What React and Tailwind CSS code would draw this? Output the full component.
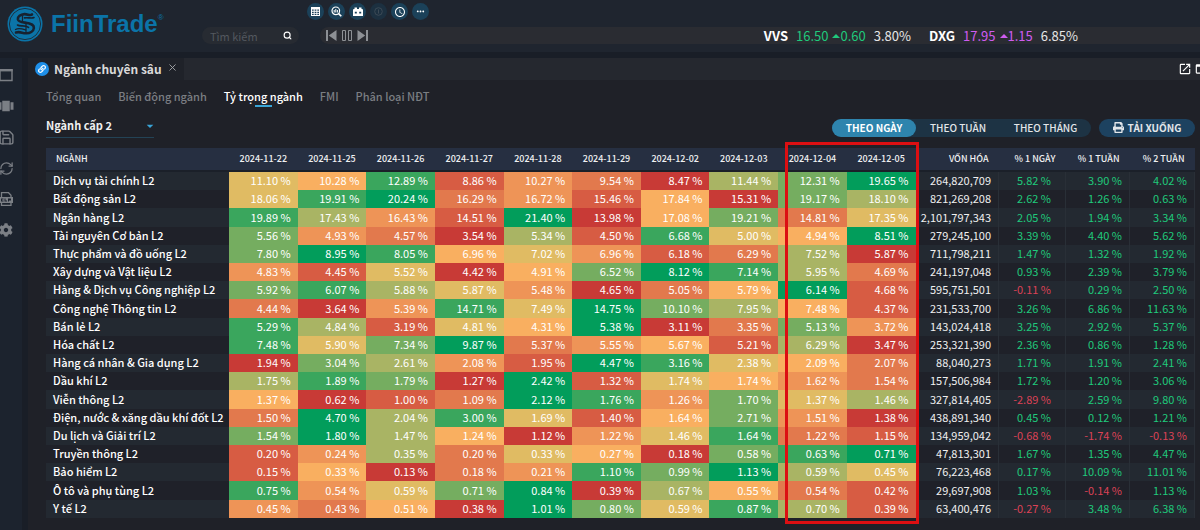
import React from 'react';
import { FaCog, FaPrint, FaLink } from 'react-icons/fa';
import {
  MdOpenInNew,
  MdOutlineWebAsset,
  MdViewCarousel,
  MdAccessTime,
  MdMoreHoriz,
  MdArrowDropDown,
} from 'react-icons/md';
import { Search, RefreshCw, Save, X } from 'lucide-react';

const DATES = [
  '2024-11-22', '2024-11-25', '2024-11-26', '2024-11-27', '2024-11-28',
  '2024-11-29', '2024-12-02', '2024-12-03', '2024-12-04', '2024-12-05',
];

// name, daily weights, market cap, % 1 day, % 1 week, % 2 weeks
const ROWS = [
  ['Dịch vụ tài chính L2', [11.1, 10.28, 12.89, 8.86, 10.27, 9.54, 8.47, 11.44, 12.31, 19.65], 264820709, 5.82, 3.9, 4.02],
  ['Bất động sản L2', [18.06, 19.91, 20.24, 16.29, 16.72, 15.46, 17.84, 15.31, 19.17, 18.1], 821269208, 2.62, 1.26, 0.63],
  ['Ngân hàng L2', [19.89, 17.43, 16.43, 14.51, 21.4, 13.98, 17.08, 19.21, 14.81, 17.35], 2101797343, 2.05, 1.94, 3.34],
  ['Tài nguyên Cơ bản L2', [5.56, 4.93, 4.57, 3.54, 5.34, 4.5, 6.68, 5.0, 4.94, 8.51], 279245100, 3.39, 4.4, 5.62],
  ['Thực phẩm và đồ uống L2', [7.8, 8.95, 8.05, 6.962, 7.02, 6.958, 6.18, 6.29, 7.52, 5.87], 711798211, 1.47, 1.32, 1.92],
  ['Xây dựng và Vật liệu L2', [4.83, 4.45, 5.52, 4.42, 4.91, 6.52, 8.12, 7.14, 5.95, 4.69], 241197048, 0.93, 2.39, 3.79],
  ['Hàng & Dịch vụ Công nghiệp L2', [5.92, 6.07, 5.88, 5.87, 5.48, 4.65, 5.05, 5.79, 6.14, 4.68], 595751501, -0.11, 0.29, 2.5],
  ['Công nghệ Thông tin L2', [4.44, 3.64, 5.39, 14.71, 7.49, 14.75, 10.1, 7.95, 7.48, 4.37], 231533700, 3.26, 6.86, 11.63],
  ['Bán lẻ L2', [5.29, 4.84, 3.19, 4.81, 4.31, 5.38, 3.11, 3.35, 5.13, 3.72], 143024418, 3.25, 2.92, 5.37],
  ['Hóa chất L2', [7.48, 5.9, 7.34, 9.87, 5.37, 5.55, 5.67, 5.21, 6.29, 3.47], 253321390, 2.36, 0.86, 1.28],
  ['Hàng cá nhân & Gia dụng L2', [1.94, 3.04, 2.61, 2.08, 1.95, 4.47, 3.16, 2.38, 2.09, 2.07], 88040273, 1.71, 1.91, 2.41],
  ['Dầu khí L2', [1.75, 1.89, 1.79, 1.27, 2.42, 1.32, 1.742, 1.738, 1.62, 1.54], 157506984, 1.72, 1.2, 3.06],
  ['Viễn thông L2', [1.368, 0.62, 1.0, 1.09, 2.12, 1.76, 1.26, 1.7, 1.372, 1.46], 327814405, -2.89, 2.59, 9.8],
  ['Điện, nước & xăng dầu khí đốt L2', [1.5, 4.7, 2.04, 3.0, 1.69, 1.4, 1.64, 2.71, 1.51, 1.38], 438891340, 0.45, 0.12, 1.21],
  ['Du lịch và Giải trí L2', [1.54, 1.8, 1.47, 1.24, 1.12, 1.222, 1.46, 1.64, 1.218, 1.15], 134959042, -0.68, -1.74, -0.13],
  ['Truyền thông L2', [0.2, 0.24, 0.35, 0.2, 0.33, 0.27, 0.18, 0.58, 0.63, 0.71], 47813301, 1.67, 1.35, 4.47],
  ['Bảo hiểm L2', [0.15, 0.33, 0.13, 0.18, 0.21, 1.1, 0.99, 1.13, 0.59, 0.45], 76223468, 0.17, 10.09, 11.01],
  ['Ô tô và phụ tùng L2', [0.75, 0.542, 0.59, 0.71, 0.84, 0.39, 0.67, 0.55, 0.538, 0.42], 29697908, 1.03, -0.14, 1.13],
  ['Y tế L2', [0.45, 0.43, 0.51, 0.38, 1.01, 0.8, 0.59, 0.87, 0.7, 0.39], 63400476, -0.27, 3.48, 6.38],
];

// lowest weight of the row first
const HEAT = [
  'bg-[#c83a36]', 'bg-[#d75c43]', 'bg-[#e2794d]', 'bg-[#ee9457]', 'bg-[#f9af60]',
  'bg-[#e0bb63]', 'bg-[#a9b464]', 'bg-[#75ad60]', 'bg-[#3aa65d]', 'bg-[#029d5b]',
];

function heatClasses(values) {
  const order = values.map((_, i) => i).sort((a, b) => values[a] - values[b]);
  return values.map((_, i) => HEAT[order.indexOf(i)]);
}

function Logo() {
  return (
    <a href="#" className="flex items-center gap-2 text-[#0b74a8]">
      <svg width="36" height="36" viewBox="0 0 36 36" aria-hidden="true">
        <circle cx="18" cy="18" r="17.5" fill="#0b74a8" />
        <circle cx="18" cy="18" r="15.6" fill="none" stroke="#1c2a38" strokeWidth="0.9" />
        <g fill="none" stroke="#172230" strokeLinecap="round" strokeLinejoin="round">
          <path d="M25 8.500c-2 1.600-4.500-.6-7.500-.4-4 .3-7 2.600-6.600 5.300.4 2.300 3.500 2.800 7 3.200 5 .6 9.300 1.800 9 5.400-.3 3.400-4 5.500-8 5.300-4-.2-6-2-9.900-.8" strokeWidth="2.600" />
          <path d="M27 11.500c-2.500 1.500-6-.4-9.500.4M10.500 19c3 2 7-.6 11 2.400" strokeWidth="1.600" />
          <path d="M8.500 23.500c3-1.800 7-.6 10 .3" strokeWidth="1.400" />
          <path d="M15.500 10v6M19 18v8" strokeWidth="1.200" />
        </g>
      </svg>
      <span className="font-['Liberation_Sans',sans-serif] text-2xl leading-7 font-bold">
        FiinTrade<sup className="text-[8px] font-normal -top-3">®</sup>
      </span>
    </a>
  );
}

function RoundButton({ label, dim, children }) {
  return (
    <button
      aria-label={label}
      className={`size-[17px] rounded-full flex items-center justify-center ${dim ? 'bg-[#1c3040] text-[#3c4a56]' : 'bg-[#1b4159] text-white'}`}
    >
      {children}
    </button>
  );
}

function Quote({ code, price, change, percent, color }) {
  return (
    <div className="flex items-center gap-2">
      <span className="font-bold text-white">{code}</span>
      <span className={`flex items-center ${color}`}>
        {price}
        <svg width="8" height="4" viewBox="0 0 8 4" className="ml-1" aria-hidden="true">
          <path d="M4 0l4 4H0z" fill="currentColor" />
        </svg>
        {change}
      </span>
      <span className="text-[#e6e6e6]">{percent}</span>
    </div>
  );
}

function Header() {
  return (
    <header className="h-[52px] shrink-0 bg-[#1f252f] flex pl-[7px]">
      <div className="w-[195px] pt-[6px]"><Logo /></div>
      <div className="flex-1 flex flex-col gap-[7px] pt-[3px]">
        <div className="flex gap-1 pl-[105px]">
          <RoundButton label="Bảng giá">
            <svg width="9" height="9" viewBox="0 0 9 9" fill="currentColor" aria-hidden="true">
              <path fillRule="evenodd" d="M0 0h9v9H0zM1 2.500v1.300h1.700V2.500zm2.600 0v1.300h1.800V2.500zm2.700 0v1.300H8V2.500zM1 4.700v1.200h1.700V4.700zm2.600 0v1.200h1.800V4.700zm2.700 0v1.200H8V4.700zM1 6.800V8h1.700V6.800zm2.600 0V8h1.800V6.800zm2.700 0V8H8V6.800z" />
            </svg>
          </RoundButton>
          <RoundButton label="Bộ lọc">
            <svg width="11" height="11" viewBox="0 0 11 11" fill="none" stroke="currentColor" aria-hidden="true">
              <circle cx="4.800" cy="4.800" r="3.800" strokeWidth="1.200" />
              <path d="M7.600 7.600l2.700 2.700" strokeWidth="1.600" />
              <path d="M3.200 4v2.500M4.800 3v3.500M6.400 4v2.500" />
            </svg>
          </RoundButton>
          <RoundButton label="Lịch sự kiện">
            <svg width="10" height="10" viewBox="0 0 10 10" fill="currentColor" aria-hidden="true">
              <path fillRule="evenodd" d="M1.500.5h2.500v1.500h2V.5h2.500v1.500H9a1 1 0 0 1 1 1V9H0V3a1 1 0 0 1 1-1h.5zM1.800 4.800v1.700h2V4.800zm4.400 0v1.700h2V4.800z" />
            </svg>
          </RoundButton>
          <RoundButton label="Thông tin" dim>
            <svg width="9" height="9" viewBox="0 0 9 9" fill="none" stroke="currentColor" aria-hidden="true">
              <circle cx="4.500" cy="4.500" r="3.800" />
              <path d="M4.500 2.500v4" />
            </svg>
          </RoundButton>
          <RoundButton label="Lịch sử"><MdAccessTime className="size-[12px]" /></RoundButton>
          <RoundButton label="Thêm"><MdMoreHoriz className="size-[11px]" /></RoundButton>
        </div>
        <div className="flex gap-[21px]">
          <label className="w-[97px] h-[17px] rounded-full bg-[#272b32] flex items-center pl-2 pr-[7px]">
            <input
              type="text"
              placeholder="Tìm kiếm"
              aria-label="Tìm kiếm"
              className="min-w-0 flex-1 bg-transparent text-[11px] leading-4 placeholder:text-[#53585f] outline-none"
            />
            <Search className="size-[9px] text-white" strokeWidth={3} />
          </label>
          <div className="flex-1 h-[17px] rounded-l-full bg-[#2a2c32] flex items-center justify-between pl-[6px] pr-[122px]">
            <div className="flex items-center gap-[5px] text-[#8d9095]">
              <button aria-label="Trước">
                <svg width="11" height="11" viewBox="0 0 11 11" fill="currentColor" aria-hidden="true">
                  <path d="M0 0h2v11H0zM10.500 0v11L2.800 5.500z" />
                </svg>
              </button>
              <button aria-label="Tạm dừng">
                <svg width="10" height="11" viewBox="0 0 10 11" fill="none" stroke="currentColor" aria-hidden="true">
                  <path d="M.5.5h3v10h-3zM6.500.5h3v10h-3z" />
                </svg>
              </button>
              <button aria-label="Sau">
                <svg width="11" height="11" viewBox="0 0 11 11" fill="currentColor" aria-hidden="true">
                  <path d="M9 0h2v11H9zM.5 0v11l7.700-5.500z" />
                </svg>
              </button>
            </div>
            <div className="flex gap-[18px] text-[13px] leading-4">
              <Quote code="VVS" price="16.50" change="0.60" percent="3.80%" color="text-[#1fc97c]" />
              <Quote code="DXG" price="17.95" change="1.15" percent="6.85%" color="text-[#cf5cf0]" />
            </div>
          </div>
        </div>
      </div>
    </header>
  );
}

function Sidebar() {
  const items = [
    ['Cửa sổ', (
      <svg width="14" height="14" viewBox="0 0 14 14" aria-hidden="true">
        <path d="M1 2h12v10.500H1z" fill="none" stroke="currentColor" strokeWidth="1.400" />
        <path d="M.3 1h13.400v2.400H.3z" fill="currentColor" />
      </svg>
    )],
    ['Bố cục', <MdViewCarousel className="size-[18px]" />],
    ['Lưu', <Save className="size-[17px]" strokeWidth={2} />],
    ['Làm mới', <RefreshCw className="size-[15px]" strokeWidth={2} />],
    ['Xuất', (
      <svg width="14" height="14" viewBox="0 0 14 14" aria-hidden="true">
        <path d="M2.500 5V.7h7l2.500 2.500V5M2.500 11v2.300H12V11" fill="none" stroke="currentColor" strokeWidth="1.300" />
        <path fill="currentColor" fillRule="evenodd" d="M0 5h14v6H0zM2 6.500v3h2.500v-1H3v-1h1.500v-1zM5.500 6.500v3H8v-1H6.500v-2zM9 6.500v3h1v-1h2v-2z" />
      </svg>
    )],
    ['Cài đặt', <FaCog className="size-[14px]" />],
  ];
  return (
    <aside className="w-[22px] shrink-0 bg-[#1c232e] text-[#7b7f85] flex flex-col items-start gap-[15px] pt-[9px]">
      {items.map(([label, icon]) => (
        <button key={label} aria-label={label} className="-ml-0.5 size-4 flex items-center justify-center *:shrink-0">
          {icon}
        </button>
      ))}
    </aside>
  );
}

function Toolbar() {
  return (
    <div className="flex items-center justify-between">
      <div className="relative w-[108px] border-b border-[#234356]">
        <select aria-label="Cấp ngành" className="block w-full h-5 pb-1 appearance-none bg-transparent text-[11px] leading-4 font-bold text-[#f0f0f0]">
          <option>Ngành cấp 2</option>
        </select>
        <MdArrowDropDown className="absolute -right-1 top-px size-4 text-[#39a5d8] pointer-events-none" />
      </div>
      <div className="flex gap-2 text-[10px] leading-4 font-medium text-[#e3e6e9]">
        <div className="flex rounded-full bg-[#1d3344]">
          <button className="w-[84px] h-[18px] rounded-full bg-[#2e84ad] font-bold text-white">THEO NGÀY</button>
          <button className="w-[84px] h-[18px]">THEO TUẦN</button>
          <button className="w-[91px] h-[18px]">THEO THÁNG</button>
        </div>
        <button className="w-[96px] h-[18px] rounded-full bg-[#1d4260] flex items-center justify-center gap-1 font-bold">
          <FaPrint className="size-[11px]" />
          TẢI XUỐNG
        </button>
      </div>
    </div>
  );
}

function Change({ value, className }) {
  return (
    <td className={`text-right border-r border-[#292f37] ${className} ${value < 0 ? 'text-[#dc4256]' : 'text-[#1fc97c]'}`}>
      {value.toFixed(2)} %
    </td>
  );
}

function IndustryTable() {
  return (
    <div className="relative flex-1 min-h-0">
      <table className="w-full h-full table-fixed text-[11px] leading-4 text-white whitespace-nowrap [&_td]:pb-0.5">
        <colgroup>
          <col className="w-[183px]" />
          {DATES.map((d) => <col key={d} />)}
          <col className="w-[83px]" />
          <col className="w-[67px]" />
          <col className="w-[64px]" />
          <col className="w-[65px]" />
        </colgroup>
        <thead>
          <tr className="h-[23px] bg-[#262f41] border-b-2 border-[#1b2029] text-[9px] text-[#f0f1f2]">
            <th className="pl-[10px] text-left font-medium">NGÀNH</th>
            {DATES.map((d) => <th key={d} className="font-medium">{d}</th>)}
            <th className="pr-[10px] text-right font-medium">VỐN HÓA</th>
            <th className="pr-[10px] text-right font-medium">% 1 NGÀY</th>
            <th className="pr-[10px] text-right font-medium">% 1 TUẦN</th>
            <th className="pr-[10px] text-right font-medium">% 2 TUẦN</th>
          </tr>
        </thead>
        <tbody>
          {ROWS.map(([name, weights, cap, day, week, twoWeeks]) => {
            const heat = heatClasses(weights);
            return (
              <tr key={name} className="odd:bg-[#232931] even:bg-[#1f2129]">
                <td className="pl-[7px] font-medium text-white">{name}</td>
                {weights.map((w, i) => (
                  <td key={DATES[i]} className={`pr-[7px] text-right ${heat[i]}`}>{w.toFixed(2)} %</td>
                ))}
                <td className="pr-[7px] text-right text-[#f0f0f0] border-r border-[#292f37]">
                  {cap.toLocaleString('en-US')}
                </td>
                <Change value={day} className="pr-[14px]" />
                <Change value={week} className="pr-[7px]" />
                <Change value={twoWeeks} className="pr-[7px]" />
              </tr>
            );
          })}
        </tbody>
      </table>
      {/* Highlight over the two latest sessions */}
      <div className="absolute -top-[6px] -bottom-[6px] right-[276px] w-[134px] border-[3px] border-[#dc0f12] pointer-events-none" />
    </div>
  );
}

export default function App() {
  const tabs = ['Tổng quan', 'Biến động ngành', 'Tỷ trọng ngành', 'FMI', 'Phân loại NĐT'];
  return (
    <div className="h-screen flex flex-col overflow-hidden bg-[#191e27] text-white font-['Noto_Sans_CJK_SC','Noto_Sans',sans-serif]">
      <Header />
      <div className="flex-1 min-h-0 flex gap-[6px] pt-[6px]">
        <Sidebar />
        <main className="flex-1 min-w-0 flex flex-col bg-[#1f2128]">
          {/* Window tab bar */}
          <div className="h-[22px] shrink-0 flex items-center justify-between bg-[#25282f]">
            <div className="h-full flex items-center gap-[5px] pl-[7px] pr-[6px] bg-[#1f2229]">
              <span className="size-[14px] rounded-full bg-[#1e8fe8] flex items-center justify-center">
                <FaLink className="size-2 text-white" />
              </span>
              <span className="text-[12px] leading-5 font-bold text-[#d9d9d9]">Ngành chuyên sâu</span>
              <button aria-label="Đóng" className="pb-1"><X className="size-[11px] text-[#a5a7aa]" /></button>
            </div>
            <div className="flex gap-[2px] -mr-[8px] text-white">
              <button aria-label="Mở cửa sổ mới"><MdOpenInNew className="size-[14px]" /></button>
              <button aria-label="Phóng to"><MdOutlineWebAsset className="size-[14px]" /></button>
            </div>
          </div>
          <div className="flex-1 min-h-0 flex flex-col pl-[18px] pr-[5px] pb-3">
            <nav className="flex gap-[17px] pt-[7px] text-[11px] leading-[18px] font-medium">
              {tabs.map((t) => (
                <a key={t} href="#" className={`flex flex-col items-center ${t === 'Tỷ trọng ngành' ? 'text-white' : 'text-[#7b7e83]'}`}>
                  {t}
                  {t === 'Tỷ trọng ngành' && <span className="w-[17px] h-[2px] bg-[#3aa5d6]" />}
                </a>
              ))}
            </nav>
            <div className="pt-[10px] pb-[10px]"><Toolbar /></div>
            <IndustryTable />
          </div>
        </main>
      </div>
    </div>
  );
}
